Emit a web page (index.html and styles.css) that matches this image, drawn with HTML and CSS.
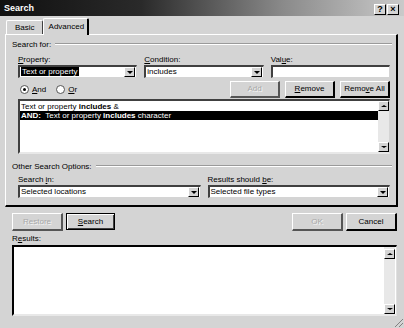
FILE: index.html
```html
<!DOCTYPE html>
<html lang="en">
<head>
    <meta charset="UTF-8">
    <title>Search</title>
    <link rel="stylesheet" href="styles.css">
</head>
<body>
    <div class="window">
        <div class="titlebar">
            <span class="title">Search</span>
            <div class="caption-btns">
                <span class="cbtn">?</span>
                <span class="cbtn">&#215;</span>
            </div>
        </div>

        <div class="client">
            <div class="tabs">
                <div class="tab">Basic</div>
                <div class="tab active">Advanced</div>
            </div>

            <div class="panel">
                <div class="group-title"><span>Search for:</span></div>

                <div class="row3">
                    <div class="field">
                        <div class="label"><u>P</u>roperty:</div>
                        <div class="combo">
                            <span class="val"><span class="hl">Text or property</span></span>
                            <span class="drop"></span>
                        </div>
                    </div>
                    <div class="field">
                        <div class="label"><u>C</u>ondition:</div>
                        <div class="combo">
                            <span class="val">includes</span>
                            <span class="drop"></span>
                        </div>
                    </div>
                    <div class="field">
                        <div class="label">Val<u>u</u>e:</div>
                        <div class="combo edit"><span class="val"></span></div>
                    </div>
                </div>

                <div class="actions">
                    <div class="radios">
                        <span class="radio"><span class="dot checked"></span><span><u>A</u>nd</span></span>
                        <span class="radio"><span class="dot"></span><span><u>O</u>r</span></span>
                    </div>
                    <div class="btns">
                        <span class="btn disabled">Add</span>
                        <span class="btn dark"><span><u>R</u>emove</span></span>
                        <span class="btn dark"><span>Remo<u>v</u>e All</span></span>
                    </div>
                </div>

                <div class="listbox">
                    <div class="items">
                        <div class="item">Text or property <b>includes</b> &amp;</div>
                        <div class="item sel"><b>AND:</b>&nbsp; Text or property <b>includes</b> character</div>
                    </div>
                    <div class="vscroll">
                        <span class="sbtn up"></span>
                        <span class="sbtn down"></span>
                    </div>
                </div>

                <div class="group-title second"><span>Other Search Options:</span></div>

                <div class="row2">
                    <div class="field">
                        <div class="label">Search <u>i</u>n:</div>
                        <div class="combo">
                            <span class="val">Selected locations</span>
                            <span class="drop"></span>
                        </div>
                    </div>
                    <div class="field">
                        <div class="label">Results should <u>b</u>e:</div>
                        <div class="combo">
                            <span class="val">Selected file types</span>
                            <span class="drop"></span>
                        </div>
                    </div>
                </div>
            </div>

            <div class="bottom">
                <div class="bottom-row">
                    <div class="pair">
                        <span class="btn wide disabled">Restore</span>
                        <span class="btn wide default"><span><u>S</u>earch</span></span>
                    </div>
                    <div class="pair">
                        <span class="btn wide disabled">OK</span>
                        <span class="btn wide dark">Cancel</span>
                    </div>
                </div>
                <div class="results-label">R<u>e</u>sults:</div>
                <div class="results">
                    <div class="vscroll">
                        <span class="sbtn up"></span>
                        <span class="sbtn down"></span>
                    </div>
                </div>
            </div>
        </div>
        <div class="grip"></div>
    </div>
</body>
</html>
```

FILE: styles.css
```css
body {
    margin: 0;
    background: #d4d4d4;
    font-family: 'Liberation Sans', Arial, sans-serif;
    font-size: 8px;
    color: #000;
}
.window {
    position: relative;
    width: 404px;
    height: 328px;
    background: #d4d4d4;
    overflow: hidden;
}
u {
    text-decoration: underline;
}

/* title bar */
.titlebar {
    height: 16px;
    display: flex;
    align-items: center;
    justify-content: space-between;
    padding: 0 5px 0 4px;
    background: linear-gradient(to right, #101010 0%, #2a2a2a 35%, #8a8a8a 70%, #cacaca 100%);
}
.title {
    color: #fff;
    font-weight: bold;
    font-size: 9px;
}
.caption-btns {
    display: flex;
    gap: 1px;
    margin-top: 2px;
}
.cbtn {
    width: 10px;
    height: 9px;
    background: #d4d4d4;
    border-top: 1px solid #fff;
    border-left: 1px solid #fff;
    border-right: 1px solid #000;
    border-bottom: 1px solid #000;
    font-size: 9px;
    font-weight: bold;
    line-height: 9px;
    text-align: center;
}

/* client area */
.client {
    padding: 1px 6px 0 5px;
}
.tabs {
    display: flex;
    height: 17px;
    align-items: flex-end;
    padding-left: 1px;
}
.tab {
    height: 13px;
    padding: 0 7px 0 8px;
    line-height: 14px;
    border-top: 1px solid #fff;
    border-left: 1px solid #fff;
    border-right: 1px solid #404040;
    border-radius: 2px 2px 0 0;
}
.tab.active {
    height: 16px;
    line-height: 15px;
    padding: 0 3px 0 5px;
    border-right: 2px solid #000;
    position: relative;
    top: 1px;
    background: #d4d4d4;
    z-index: 1;
}
.panel {
    height: 170px;
    border-top: 1px solid #fff;
    border-left: 1px solid #fff;
    border-right: 2px solid #000;
    border-bottom: 2px solid #000;
    padding: 0 6px 0 12px;
}

.group-title {
    display: flex;
    align-items: center;
    gap: 4px;
    margin: 3px -2px 0 -6px;
    height: 12px;
}
.group-title::after {
    content: "";
    flex: 1;
    border-top: 1px solid #9a9a9a;
    border-bottom: 1px solid #fff;
}
.group-title.second {
    margin-top: 6px;
}

.row3 {
    display: grid;
    grid-template-columns: 1fr 1fr 1fr;
    column-gap: 7px;
    margin-top: 5px;
}
.row2 {
    display: grid;
    grid-template-columns: 1fr 1fr;
    column-gap: 7px;
    margin-top: 3px;
}
.label {
    height: 10px;
    line-height: 9px;
}
.combo {
    height: 10px;
    display: flex;
    align-items: center;
    background: #fff;
    border-top: 2px solid #404040;
    border-left: 2px solid #404040;
    border-right: 1px solid #d4d4d4;
    border-bottom: 1px solid #d4d4d4;
    padding: 0 1px 0 1px;
}
.combo .val {
    flex: 1;
    line-height: 10px;
}
.hl {
    background: #000;
    color: #fff;
    padding: 0 1px;
}
.drop {
    width: 9px;
    height: 8px;
    background: #d4d4d4;
    border-top: 1px solid #fff;
    border-left: 1px solid #fff;
    border-right: 1px solid #000;
    border-bottom: 1px solid #000;
    position: relative;
}
.drop::after {
    content: "";
    position: absolute;
    left: 2px;
    top: 3px;
    border-left: 3px solid transparent;
    border-right: 3px solid transparent;
    border-top: 3px solid #000;
}

.actions {
    display: flex;
    justify-content: space-between;
    align-items: center;
    margin-top: 3px;
    height: 16px;
}
.radios {
    display: flex;
    gap: 10px;
    padding-left: 2px;
}
.radio {
    display: flex;
    align-items: center;
    gap: 3px;
}
.dot {
    width: 7px;
    height: 7px;
    border-radius: 50%;
    background: #fff;
    border: 1px solid #555;
    position: relative;
}
.dot.checked::after {
    content: "";
    position: absolute;
    left: 2px;
    top: 2px;
    width: 3px;
    height: 3px;
    border-radius: 50%;
    background: #000;
}
.btns {
    display: flex;
    gap: 5px;
}
.btn {
    height: 14px;
    width: 47px;
    display: flex;
    align-items: center;
    justify-content: center;
    border-top: 1px solid #fff;
    border-left: 1px solid #fff;
    border-right: 2px solid #555;
    border-bottom: 2px solid #555;
}
.btn.dark {
    border-right-color: #000;
    border-bottom-color: #000;
}
.btn.disabled {
    color: #a8a8a8;
    text-shadow: 1px 1px 0 #f4f4f4;
}
.btn.wide {
    width: 48px;
    height: 15px;
}
.btn.default {
    border: 1px solid #000;
    box-shadow: inset 1px 1px 0 #fff, inset -1px -1px 0 #404040;
    width: 47px;
    height: 15px;
}

.listbox {
    margin-top: 2px;
    height: 51px;
    display: flex;
    background: #fff;
    border-top: 2px solid #404040;
    border-left: 2px solid #404040;
    border-right: 1px solid #d4d4d4;
    border-bottom: 2px solid #e8e8e8;
}
.items {
    flex: 1;
    padding-top: 1px;
}
.item {
    height: 9px;
    line-height: 9px;
    padding-left: 1px;
}
.item.sel {
    background: #000;
    color: #fff;
}
.vscroll {
    width: 11px;
    background: #e8e8e8;
    display: flex;
    flex-direction: column;
    justify-content: space-between;
}
.sbtn {
    height: 8px;
    background: #d4d4d4;
    border-top: 1px solid #fff;
    border-left: 1px solid #fff;
    border-right: 1px solid #000;
    border-bottom: 1px solid #000;
    position: relative;
}
.sbtn::after {
    content: "";
    position: absolute;
    left: 2px;
    top: 3px;
    border-left: 3px solid transparent;
    border-right: 3px solid transparent;
}
.sbtn.up::after {
    border-bottom: 2px solid #000;
}
.sbtn.down::after {
    border-top: 2px solid #000;
}

/* lower part */
.bottom {
    padding: 6px 1px 0 7px;
}
.bottom-row {
    display: flex;
    justify-content: space-between;
}
.pair {
    display: flex;
    gap: 3px;
}
.results-label {
    margin-top: 3px;
    height: 10px;
    line-height: 9px;
}
.results {
    margin-top: 1px;
    height: 67px;
    display: flex;
    justify-content: flex-end;
    background: #fff;
    border-top: 2px solid #000;
    border-left: 2px solid #000;
    border-right: 1px solid #e0e0e0;
    border-bottom: 2px solid #e8e8e8;
    padding-right: 1px;
}
.results .vscroll {
    padding: 2px 0 0;
}
.grip {
    position: absolute;
    right: 1px;
    bottom: 1px;
    width: 8px;
    height: 8px;
    background: linear-gradient(135deg, transparent 45%, #808080 45%, #808080 55%, transparent 55%, transparent 70%, #808080 70%, #808080 80%, transparent 80%);
}
```
